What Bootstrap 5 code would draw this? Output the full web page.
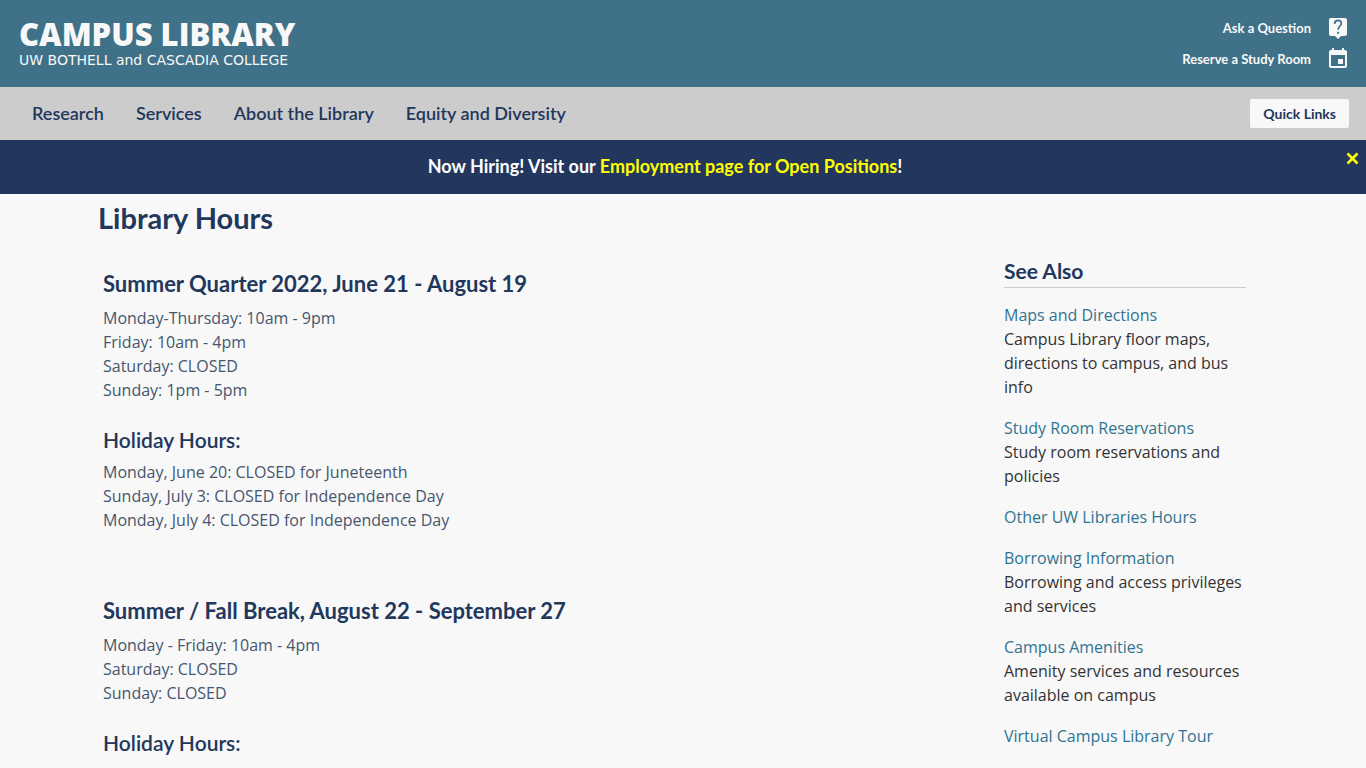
<!DOCTYPE html>
<html lang="en">
<head>
<meta charset="utf-8">
<meta name="viewport" content="width=device-width, initial-scale=1">
<title>Library Hours - Campus Library</title>
<link href="https://cdn.jsdelivr.net/npm/bootstrap@5.3.0/dist/css/bootstrap.min.css" rel="stylesheet">
<style>
  :root { --navy: #22375c; --teal: #3f7188; --paper: #f8f8f8; }
  body { font-family: "Open Sans", sans-serif; font-size: 16px; line-height: 24px; color: #333; background: var(--paper); }
  h1, h2, h3, .lato { font-family: Lato, sans-serif; color: var(--navy); }
  .site-header { background: var(--teal); padding: 16px 16px 16px 19px; }
  .brand-title { font-size: 31px; line-height: 36px; font-weight: 800; }
  .brand-sub { font-family: "DejaVu Sans", sans-serif; font-size: 14px; line-height: 17px; }
  .site-header a { color: var(--paper); text-decoration: none; }
  .tool-link { font-size: 13px; line-height: 24px; font-weight: 700; gap: 15px; }
  .tool-links { gap: 7px; }
  .site-nav { background: #ccc; padding: 11px 17px 12px 32px; }
  .site-nav .nav { gap: 32px; }
  .site-nav .nav-link { font-size: 18px; line-height: 30px; font-weight: 600; color: var(--navy); padding: 0; }
  .quick-btn { background: var(--paper); font-size: 14px; line-height: 21px; font-weight: 700; border: 0; border-radius: 2px; padding: 4px 13px; }
  .notice { background: #23375e; color: #fff; font-family: Lato, sans-serif; font-size: 18px; line-height: 26px; font-weight: 700; padding: 13px 36px 15px 0; }
  .notice a, .notice-close { color: #ff0; text-decoration: none; }
  .notice-close { top: 12px; right: 7px; background: none; border: 0; padding: 0; line-height: 0; }
  .page-wrap { max-width: 1170px; }
  h1 { font-size: 29px; line-height: 36px; font-weight: 700; margin: 6px 0 21px; }
  .hours-main { padding: 12px 0 0 5px; }
  .hours-block { margin-bottom: 64px; color: #46566f; }
  .hours-block p { margin: 0; }
  .hours-block h2 { font-size: 22px; line-height: 30px; font-weight: 700; margin: 0 0 7px; }
  .hours-block h3 { font-size: 21px; line-height: 28px; font-weight: 600; margin: 24px 0 6px; }
  .see-also { flex: 0 0 242px; margin-right: 22px; }
  .see-also h2 { font-size: 21px; line-height: 28px; font-weight: 700; border-bottom: 1px solid #ccc; padding-bottom: 2px; margin: 0 0 15px; }
  .see-also p { margin: 0 0 17px; }
  .see-also a { color: #2f7490; text-decoration: none; }
</style>
</head>
<body>
<header class="site-header d-flex justify-content-between align-items-start">
  <a href="#" class="d-flex flex-column">
    <span class="brand-title">CAMPUS LIBRARY</span>
    <span class="brand-sub">UW BOTHELL and CASCADIA COLLEGE</span>
  </a>
  <div class="tool-links d-flex flex-column align-items-end">
    <a href="#" class="tool-link lato d-flex align-items-center">Ask a Question
      <svg width="24" height="24" viewBox="0 0 24 24" fill="currentColor" aria-hidden="true"><path d="M19 2H5c-1.100 0-2 .9-2 2v14c0 1.100.9 2 2 2h4l3 3 3-3h4c1.100 0 2-.9 2-2V4c0-1.100-.9-2-2-2z"/><path d="M8.600 7.800C8.800 5.600 10.200 4.400 12 4.400c2 0 3.300 1.200 3.300 3 0 2.800-3.200 3-3.200 6.400" fill="none" stroke="#3f7188" stroke-width="1.700"/><path d="M11.100 15.800h2v2h-2z" fill="#3f7188"/></svg>
    </a>
    <a href="#" class="tool-link lato d-flex align-items-center">Reserve a Study Room
      <svg width="24" height="24" viewBox="0 0 24 24" fill="currentColor" aria-hidden="true"><path d="M17 12h-5v5h5v-5zM16 1v2H8V1H6v2H5c-1.110 0-2 .9-2 2v14c0 1.100.89 2 2 2h14c1.100 0 2-.9 2-2V5c0-1.100-.9-2-2-2h-1V1h-2zm3 18H5V8h14v11z"/></svg>
    </a>
  </div>
</header>
<nav class="site-nav d-flex justify-content-between align-items-center">
  <ul class="nav lato">
    <li class="nav-item"><a class="nav-link" href="#">Research</a></li>
    <li class="nav-item"><a class="nav-link" href="#">Services</a></li>
    <li class="nav-item"><a class="nav-link" href="#">About the Library</a></li>
    <li class="nav-item"><a class="nav-link" href="#">Equity and Diversity</a></li>
  </ul>
  <button type="button" class="quick-btn lato">Quick Links</button>
</nav>
<div class="notice position-relative text-center">
  Now Hiring! Visit our <a href="#">Employment page for Open Positions</a>!
  <button type="button" class="notice-close position-absolute" aria-label="Close">
    <svg width="13" height="13" viewBox="0 0 13 13" stroke="currentColor" stroke-width="2.600" aria-hidden="true"><path d="M1.500 1.500l10 10M11.500 1.500l-10 10"/></svg>
  </button>
</div>
<div class="page-wrap mx-auto">
  <h1>Library Hours</h1>
  <div class="d-flex justify-content-between align-items-start">
    <main class="hours-main flex-grow-1">
      <section class="hours-block">
        <h2>Summer Quarter 2022, June 21 - August 19</h2>
        <p>Monday-Thursday: 10am - 9pm<br>Friday: 10am - 4pm<br>Saturday: CLOSED<br>Sunday: 1pm - 5pm</p>
        <h3>Holiday Hours:</h3>
        <p>Monday, June 20: CLOSED for Juneteenth<br>Sunday, July 3: CLOSED for Independence Day<br>Monday, July 4: CLOSED for Independence Day</p>
      </section>
      <section class="hours-block mb-0">
        <h2>Summer / Fall Break, August 22 - September 27</h2>
        <p>Monday - Friday: 10am - 4pm<br>Saturday: CLOSED<br>Sunday: CLOSED</p>
        <h3>Holiday Hours:</h3>
      </section>
    </main>
    <aside class="see-also">
      <h2>See Also</h2>
      <p><a href="#">Maps and Directions</a><br>Campus Library floor maps, directions to campus, and bus info</p>
      <p><a href="#">Study Room Reservations</a><br>Study room reservations and policies</p>
      <p><a href="#">Other UW Libraries Hours</a></p>
      <p><a href="#">Borrowing Information</a><br>Borrowing and access privileges and services</p>
      <p><a href="#">Campus Amenities</a><br>Amenity services and resources available on campus</p>
      <p class="mb-0"><a href="#">Virtual Campus Library Tour</a></p>
    </aside>
  </div>
</div>
<script src="https://cdn.jsdelivr.net/npm/bootstrap@5.3.0/dist/js/bootstrap.bundle.min.js"></script>
</body>
</html>
